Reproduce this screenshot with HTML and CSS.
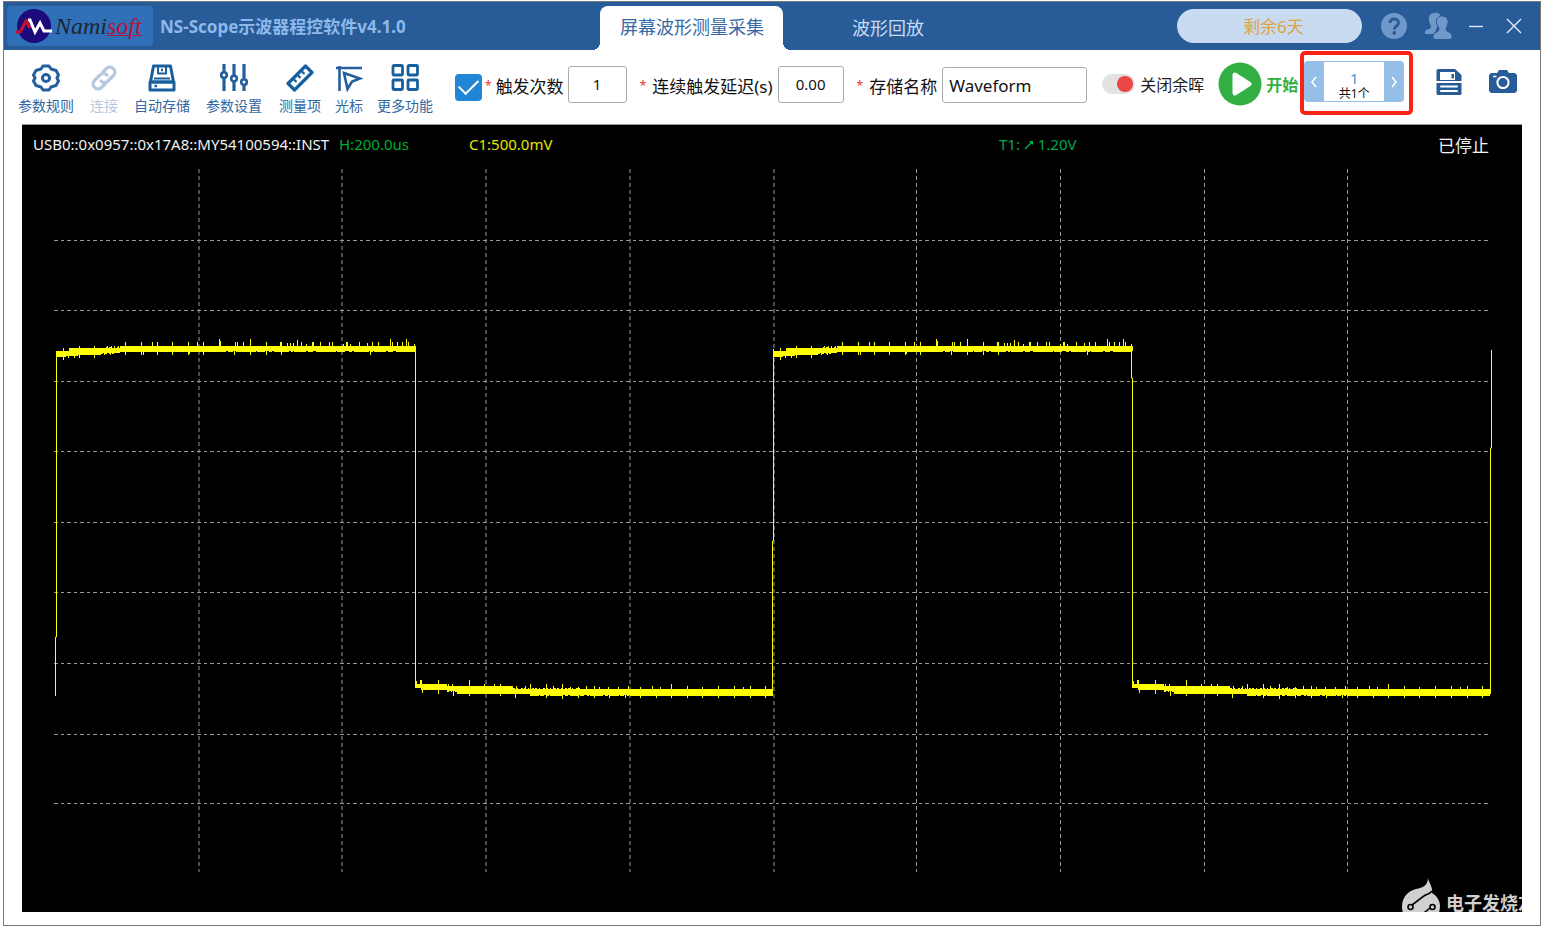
FILE: index.html
```html
<!DOCTYPE html>
<html lang="zh-CN">
<head>
<meta charset="utf-8">
<title>NS-Scope示波器程控软件v4.1.0</title>
<link rel="stylesheet" href="styles.css">
</head>
<body>
<div class="window">
  <header class="titlebar">
    <div class="brand">
      <div class="logo">
        <svg class="logo-mark" viewBox="0 0 40 36" width="40" height="36" aria-hidden="true">
          <circle cx="19" cy="18" r="17" fill="#1d0b7c"/>
          <path d="M1 24H5L11 13L15 20" fill="none" stroke="#c4122f" stroke-width="3"/>
          <path d="M13 12H15L20 24L25 15L29 23H37" fill="none" stroke="#fff" stroke-width="3"/>
        </svg>
        <span class="logo-text">Nami<span class="logo-soft">soft</span></span>
      </div>
      <h1 class="title">NS-Scope示波器程控软件v4.1.0</h1>
    </div>
    <nav class="tabs">
      <button class="tab tab-active" type="button">屏幕波形测量采集</button>
      <button class="tab" type="button">波形回放</button>
    </nav>
    <div class="window-tools">
      <button class="trial" type="button">剩余6天</button>
      <button class="icon-button help" type="button" aria-label="帮助">
        <svg viewBox="0 0 28 28" width="28" height="28"><circle cx="14" cy="14" r="13" fill="#7099ca"/><path d="M10 11C10 5.500 18.500 5.500 18.500 11C18.500 14 14.300 14 14.300 17.500" fill="none" stroke="#285c98" stroke-width="3"/><circle cx="14.300" cy="21" r="1.900" fill="#285c98"/></svg>
      </button>
      <button class="icon-button users" type="button" aria-label="用户">
        <svg viewBox="0 0 28 28" width="28" height="28"><path d="M10 1C14 0 17 2 17 6L11 20L9 22H2C0 22 1 19 2 18C4 17 7 17 7 15C7 13 5 11 5 8C4.500 4 6 1.500 10 1Z" fill="#7099ca"/><path d="M18 4C22.500 4 24.500 7 24 11C23.500 14 22 15 22 17.500C22 20 28 19.500 28 24.500C28 26.500 27 27.500 25 27.500H12C10 27.500 9 26.500 9 24.500C9 20 15 20 15 17.500C15 15 13 14 12.500 11C12 7 13.500 4 18 4Z" fill="#7099ca" stroke="#285c98" stroke-width="1"/></svg>
      </button>
      <button class="icon-button minimize" type="button" aria-label="最小化">
        <svg viewBox="0 0 16 16" width="16" height="16"><path d="M1 8.500H15" stroke="#dce8f6" stroke-width="1.400"/></svg>
      </button>
      <button class="icon-button" type="button" aria-label="关闭">
        <svg viewBox="0 0 16 16" width="16" height="16"><path d="M1 1L15 15M15 1L1 15" stroke="#e6effa" stroke-width="1.400"/></svg>
      </button>
    </div>
  </header>

  <div class="toolbar">
    <div class="tools">
      <button class="tool" type="button">
        <svg viewBox="0 0 28 28" width="28" height="28" fill="none" stroke="#23609f" stroke-width="3" stroke-linejoin="round"><path d="M11 2H17L19 5L24 6.500L26.500 11L25 14L26.500 17L24 21.500L19 23L17 26H11L9 23L4 21.500L1.500 17L3 14L1.500 11L4 6.500L9 5Z"/><circle cx="14" cy="14" r="3.600"/></svg>
        <span>参数规则</span>
      </button>
      <button class="tool" type="button" disabled>
        <svg viewBox="0 0 28 28" width="28" height="28" fill="none" stroke="#b7c9de" stroke-width="3.200" stroke-linecap="round"><path d="M12.500 8.500L16.500 4.500C21 0 28 7 23.500 11.500L18 17C16 19 13 19 11 17"/><path d="M15.500 19.500L11.500 23.500C7 28 0 21 4.500 16.500L10 11C12 9 15 9 17 11"/></svg>
        <span>连接</span>
      </button>
      <button class="tool" type="button">
        <svg viewBox="0 0 28 28" width="28" height="28" fill="none" stroke="#17609d" stroke-width="3" stroke-linejoin="round"><path d="M5.500 2H22.500L25.500 18H2.500Z"/><path d="M2 18H26V26H2Z"/><path d="M10 3V9.500H18V3" stroke-width="2"/><path d="M13 6H15M6.500 22H9" stroke-width="2.600"/><path d="M6 14.500H22" stroke-width="2"/></svg>
        <span>自动存储</span>
      </button>
      <button class="tool" type="button">
        <svg viewBox="0 0 28 28" width="28" height="28" fill="none" stroke="#245f9d" stroke-width="3.200"><path d="M4 0V8M4 14V27M14 0V11M14 17V27M24 0V14M24 21V27"/><circle cx="4" cy="11" r="2.800" stroke-width="2.600"/><circle cx="14" cy="14.500" r="2.800" stroke-width="2.600"/><circle cx="24" cy="18" r="2.800" stroke-width="2.600"/></svg>
        <span>参数设置</span>
      </button>
    </div>
    <div class="tools tools-tight">
      <button class="tool" type="button">
        <svg viewBox="0 0 28 28" width="28" height="28" fill="none" stroke="#17609d" stroke-width="3.200" stroke-linejoin="round"><path d="M19.500 2L26 8.500L8.500 26L2 19.500Z"/><path d="M7 14.500L10.500 18M11 10.500L14.500 14M15 6.500L18.500 10" stroke-width="2.200"/></svg>
        <span>测量项</span>
      </button>
      <button class="tool" type="button">
        <svg viewBox="0 0 28 28" width="28" height="28" fill="none" stroke="#245f9d" stroke-width="2.600"><path d="M1 4H27M4.500 2V27"/><path d="M9 9L25 14.500L17 17.500L12.500 25Z"/></svg>
        <span>光标</span>
      </button>
      <button class="tool" type="button">
        <svg viewBox="0 0 28 28" width="28" height="28" fill="none" stroke="#17609d" stroke-width="2.800"><rect x="2" y="1.500" width="9.500" height="9.500" rx="1"/><rect x="17" y="1.500" width="9.500" height="9.500" rx="1"/><rect x="2" y="16" width="9.500" height="9.500" rx="1"/><rect x="17" y="16" width="9.500" height="9.500" rx="1"/></svg>
        <span>更多功能</span>
      </button>
    </div>

    <div class="field count-field">
      <input class="check" type="checkbox" id="limit" aria-label="启用触发次数" checked>
      <label for="count"><span class="required">*</span>触发次数</label>
      <input class="box box-count" id="count" type="text" value="1">
    </div>
    <div class="field">
      <label class="wide-label" for="delay"><span class="required">*</span>连续触发延迟(s)</label>
      <input class="box box-delay" id="delay" type="text" value="0.00">
    </div>
    <div class="field">
      <label class="wide-label" for="name"><span class="required">*</span>存储名称</label>
      <input class="box box-name" id="name" type="text" value="Waveform">
    </div>
    <label class="persist"><input class="switch" type="checkbox" role="switch" checked>关闭余晖</label>
    <button class="start" type="button">
      <svg viewBox="0 0 44 44" width="44" height="44"><circle cx="22" cy="22" r="21.500" fill="#33b044"/><path d="M17 13L31 22L17 31Z" fill="#fff" stroke="#fff" stroke-width="5" stroke-linejoin="round"/></svg>
      <span>开始</span>
    </button>
    <div class="pager">
      <button class="page-step" type="button" aria-label="上一个"><svg viewBox="0 0 8 12" width="8" height="12"><path d="M6 1L2 6L6 11" fill="none" stroke="#fff" stroke-width="1.600"/></svg></button>
      <div class="page-info"><span class="page-now">1</span><span class="page-total">共1个</span></div>
      <button class="page-step" type="button" aria-label="下一个"><svg viewBox="0 0 8 12" width="8" height="12"><path d="M2 1L6 6L2 11" fill="none" stroke="#fff" stroke-width="1.600"/></svg></button>
    </div>
    <div class="file-tools">
      <button class="icon-button" type="button" aria-label="保存">
        <svg viewBox="0 0 26 28" width="26" height="28"><path d="M2 1H19L25.500 7V26L24.500 27H1.500L.5 26V2Z" fill="#285c98"/><path d="M4 4H19V12H4Z" fill="#fff"/><path d="M15.500 6H18V10.500H15.500Z" fill="#285c98"/><path d="M.5 14H25.500M5 18.500H21M5 23H21" stroke="#fff" stroke-width="2" stroke-linecap="round"/></svg>
      </button>
      <button class="icon-button" type="button" aria-label="截图">
        <svg viewBox="0 0 28 26" width="28" height="26"><path d="M8 4L10 1H18L20 4H26L28 6V22L26 24H2L0 22V6L2 4Z" fill="#285c98"/><circle cx="14" cy="13.500" r="5.600" fill="none" stroke="#fff" stroke-width="2"/><path d="M4 7.500H7.500" stroke="#fff" stroke-width="1.500"/></svg>
      </button>
    </div>
  </div>

  <main class="scope">
    <div class="readouts">
      <span>USB0::0x0957::0x17A8::MY54100594::INST</span>
      <span class="timebase">H:200.0us</span>
      <span class="channel">C1:500.0mV</span>
      <span class="trigger">T1: <svg viewBox="0 0 10 10" width="10" height="10" aria-label="上升沿"><path d="M1 9L8 2" stroke="#00b85a" stroke-width="1.200"/><path d="M5 1H9V5Z" fill="#00b85a"/></svg> 1.20V</span>
      <span class="status">已停止</span>
    </div>
    <svg class="plot" viewBox="0 0 1500 743" preserveAspectRatio="none" role="img" aria-label="C1 波形">
      <defs>
        <g id="high" stroke="#ffff00" stroke-width="1" fill="none">
          <path fill="#ffff00" stroke="none" d="M0 31H13V28H64V26H360V31H158V32H64V33H45V35H22V36H10V37H0Z"/>
          <path stroke-dasharray="12 2 5 3 20 1 8 4 3 2 15 2 2 1" d="M158 31.500H359"/>
          <path stroke-dasharray="2 1 3 2 1 2" d="M45 33.500H58M50 27.500H64"/>
          <path d="M7.500 28V32M23.500 26V30M38.500 26V30M51.500 26V29M55.500 26V29M58.500 26V29M62.500 26V29M69.500 22V27M85.500 22V27M96.500 22V27M101.500 22V27M116.500 22V27M132.500 22V27M141.500 22V27M147.500 22V27M163.500 19V27M164.500 21V27M179.500 22V27M181.500 22V27M187.500 22V27M194.500 19V27M210.500 22V27M224.500 22V27M225.500 22V27M231.500 23V27M234.500 23V27M237.500 23V27M241.500 20V27M245.500 22V27M250.500 24V27M256.500 22V27M257.500 22V27M264.500 22V27M273.500 22V27M276.500 22V27M287.500 24V27M290.500 22V27M291.500 22V27M294.500 24V27M303.500 22V27M311.500 23V27M316.500 22V27M322.500 22V27M334.500 19V27M336.500 22V27M341.500 22V27M346.500 22V27M350.500 19V27M352.500 22V27M358.500 24V27"/>
          <path d="M7.500 36V40M12.500 35V38M18.500 35V38M23.500 35V38M38.500 35V38M48.500 33V35M54.500 32V35M69.500 31V35M85.500 31V35M87.500 31V35M101.500 31V35M116.500 31V35M132.500 31V35M133.500 31V34M147.500 31V35M178.500 30V35M194.500 30V35M210.500 30V35M225.500 30V35M314.500 30V35"/>
        </g>
        <g id="low" stroke="#ffff00" stroke-width="1" fill="none">
          <path fill="#ffff00" stroke="none" d="M0 24H32V26H98V29H358V36H220V35H115V34H42V31H32V30H6V28H0Z"/>
          <path stroke-dasharray="9 1 4 3 2 1 13 2 3 2" d="M115 35.500H220"/>
          <path stroke-dasharray="2 2 1 3 2 1" d="M98 28.500H165M32 31.500H42"/>
          <path d="M1.500 21V25M5.500 20V25M6.500 20V25M23.500 20V25M33.500 24V27M37.500 24V27M54.500 20V27M69.500 24V27M79.500 24V27M85.500 24V27M101.500 26V29M110.500 26V29M115.500 24V29M131.500 24V29M138.500 26V29M147.500 24V29M155.500 27V29M163.500 27V29M171.500 26V29M179.500 26V29M184.500 27V29M193.500 27V29M203.500 27V29M213.500 26V29M225.500 27V29M237.500 26V29M245.500 27V29M256.500 24V29M272.500 26V29M287.500 27V29M303.500 26V29M319.500 26V29M328.500 27V29M335.500 26V29M350.500 26V29"/>
          <path d="M7.500 29V33M23.500 29V34M38.500 31V36M54.500 33V36M85.500 33V36M100.500 33V38M115.500 34V36M131.500 34V38M147.500 34V39M163.500 34V38M179.500 34V38M194.500 34V38M210.500 34V38M225.500 35V38M241.500 35V38M256.500 35V38M272.500 35V38M287.500 35V38M303.500 35V38M319.500 35V38M335.500 35V38M350.500 35V38"/>
        </g>
      </defs>
      <path class="grid-line grid-rows" d="M32 71.500H1469M32 141.500H1469M32 212.500H1469M32 282.500H1469M32 353.500H1469M32 423.500H1469M32 494.500H1469M32 565.500H1469M32 634.500H1469"/>
      <path class="grid-line grid-columns" d="M177 0V703M320 0V703M464 0V703M608 0V703M752 0V703M894.500 0V703M1038.500 0V703M1182.500 0V703M1325.500 0V703"/>
      <path class="trace" d="M33.500 527V468H34.500V182M393.500 178V518M750.500 525V372H751.500V180M1109.500 178V209H1110.500V518M1468.500 525V279H1469.500V181"/>
      <use href="#high" x="34" y="151"/>
      <use href="#low" x="393" y="491"/>
      <use href="#high" x="751" y="151"/>
      <use href="#low" x="1110" y="491"/>
    </svg>
    <div class="watermark">
      <svg viewBox="0 0 40 48" width="40" height="48" aria-hidden="true"><path d="M27 0C28 5 32 9 31 15C36 18 39 23 39 28C39 39 31 47 20 47C9 47 1 39 1 29C1 19 7 13 15 11C22 10 27 7 27 0Z" fill="#d0d0d0"/><path d="M31 13C28 17 25 16 23 18L11 27M29 30L18 39" fill="none" stroke="#000" stroke-width="1.600"/><circle cx="9.500" cy="29" r="2.500" fill="none" stroke="#000" stroke-width="1.600"/><circle cx="31.500" cy="29" r="2.500" fill="none" stroke="#000" stroke-width="1.600"/></svg>
      <span>电子发烧友</span>
    </div>
  </main>
</div>
</body>
</html>
```
FILE: styles.css
```css
* { box-sizing: border-box; }

body {
  margin: 0;
  padding: 1px 0 2px 3px;
  background: #fff;
  color: #1a1a1a;
  font-family: "Noto Sans", "Noto Sans CJK SC", sans-serif;
}

button, input { font-family: inherit; color: inherit; }
button { border: 0; padding: 0; background: none; }
svg { display: block; flex: none; }

.window {
  display: flex;
  flex-direction: column;
  min-height: calc(100vh - 3px);
  border: 1px solid #777;
}

.titlebar {
  display: grid;
  grid-template-columns: 596px auto 1fr;
  height: 48px;
  background: #285c98;
  white-space: nowrap;
}

.brand { display: flex; align-items: center; padding-left: 3px; gap: 7px; }

.logo {
  display: flex;
  align-items: center;
  width: 146px;
  height: 40px;
  padding-left: 8px;
  border-radius: 4px;
  background: #2f70b8;
}

.logo-text { font: italic 24px/32px "Liberation Serif", serif; color: #1f2430; }
.logo-soft { color: #b5123c; text-decoration: underline; text-decoration-thickness: 1px; }
.title { margin: 0; padding-top: 2px; font-size: 17px; line-height: 24px; font-weight: 700; color: #8db8ea; }

.tabs { display: flex; align-items: flex-end; gap: 51px; }
.tab { height: 44px; padding: 0 18px; font-size: 18px; line-height: 24px; color: #c8dbf2; }
.tab-active { position: relative; padding: 0 19px 2px 20px; border-radius: 8px 8px 0 0; background: #fff; color: #376aa5; }
.tab-active::before, .tab-active::after {
  content: "";
  position: absolute;
  bottom: 0;
  width: 8px;
  height: 8px;
}
.tab-active::before { right: 100%; background: radial-gradient(circle at 0 0, #285c98 8px, #fff 8px); }
.tab-active::after { left: 100%; background: radial-gradient(circle at 100% 0, #285c98 8px, #fff 8px); }

.window-tools { display: flex; align-items: center; justify-content: flex-end; padding: 0 18px 1px 0; }
.trial { width: 185px; height: 34px; border-radius: 17px; background: #c9dbf1; font-size: 17px; color: #dca447; padding-left: 8px; }
.icon-button { display: flex; }
.help { margin-left: 18px; }
.users { margin-left: 16px; }
.minimize { margin: 0 22px 0 16px; }

.toolbar { display: flex; align-items: center; height: 73px; padding: 0 23px 5px 14px; white-space: nowrap; }
.tools { display: flex; gap: 16px; }
.tools-tight { gap: 14px; margin-left: 17px; }
.tool {
  display: flex;
  flex-direction: column;
  align-items: center;
  gap: 4px;
  padding-top: 12px;
  font-size: 14px;
  line-height: 20px;
  color: #2f68a4;
}
.tool:disabled { color: #b7c9de; }

.field { display: flex; align-items: center; font-size: 17px; color: #111; }
.field + .field { margin-left: 13px; }
.count-field { margin-left: 22px; }
.field label { display: flex; align-items: center; gap: 4px; margin: 2px 4px 0 3px; }
.field .wide-label { gap: 6px; margin: 2px 5px 0 0; }
.field .required { font-size: 12px; color: #f03030; }

.check {
  appearance: none;
  width: 27px;
  height: 27px;
  margin: 6px 0 0;
  border-radius: 4px;
  background: #2285d6;
  display: grid;
  place-items: center;
}
.check::after {
  content: "";
  width: 17px;
  height: 9px;
  margin-bottom: 5px;
  border: solid #fff;
  border-width: 0 0 2px 2px;
  transform: rotate(-45deg);
}
.check:not(:checked)::after { visibility: hidden; }

.box { height: 37px; padding: 0 6px; border: 1px solid #aaa; border-radius: 3px; background: #fff; font-size: 15px; text-align: center; }
.box-count { width: 59px; }
.box-delay { width: 66px; }
.box-name { width: 145px; height: 36px; margin-top: 2px; font-size: 17px; text-align: left; }

.persist { display: flex; align-items: center; gap: 5px; margin-left: 15px; font-size: 16px; color: #222; }
.switch { appearance: none; width: 33px; height: 20px; margin: 0; padding: 2px; border-radius: 10px; background: #e2e2e2; }
.switch::after { content: ""; display: block; width: 16px; height: 16px; border-radius: 8px; background: #ec4545; }
.switch:checked::after { margin-left: auto; }

.start { display: flex; align-items: center; gap: 4px; margin-left: 14px; font-size: 16px; font-weight: 700; color: #33b044; }

.pager { position: relative; display: flex; width: 100px; height: 41px; margin: 0 0 5px 6px; border-radius: 4px; background: #95bfe9; }
.pager::after {
  content: "";
  position: absolute;
  inset: -10px -9px -13px -4px;
  border: 4px solid #fb2314;
  border-radius: 5px;
  pointer-events: none;
}
.page-step { display: grid; place-items: center; width: 20px; }
.page-info { flex: 1; display: flex; flex-direction: column; align-items: center; justify-content: flex-end; margin: 1px 0; background: #fff; }
.page-now { font-size: 15px; line-height: 16px; color: #4a95d8; }
.page-total { font-size: 12px; line-height: 15px; color: #111; }

.file-tools { display: flex; align-items: center; gap: 27px; margin: 0 0 5px auto; }

.scope {
  position: relative;
  flex: 1;
  display: flex;
  flex-direction: column;
  margin: 1px 18px 13px;
  border-top: 1px solid #999;
  background: #000;
  overflow: hidden;
}
.readouts {
  display: grid;
  grid-template-columns: 306fr 130fr 530fr 439fr auto;
  align-items: start;
  height: 44px;
  padding: 9px 33px 0 11px;
  font-size: 15px;
  line-height: 20px;
  color: #f2f2f2;
  white-space: nowrap;
}
.timebase { color: #00ac32; }
.channel { color: #e6e600; }
.trigger { color: #00a651; }
.trigger svg { display: inline-block; }
.status { font-size: 17px; line-height: 24px; }

.plot { flex: 1; width: 100%; min-height: 0; }
.grid-line { fill: none; stroke: #999; stroke-width: 1px; }
.grid-rows { stroke-dasharray: 4 3 3 3; }
.grid-columns { stroke-dasharray: 4 3; }
.trace { fill: none; stroke: #ffff00; stroke-width: 1px; }

.watermark {
  position: absolute;
  left: calc(100% - 121px);
  bottom: -14px;
  display: flex;
  align-items: center;
  gap: 5px;
  font-size: 18px;
  font-weight: 700;
  color: #d0d0d0;
  white-space: nowrap;
}
```
